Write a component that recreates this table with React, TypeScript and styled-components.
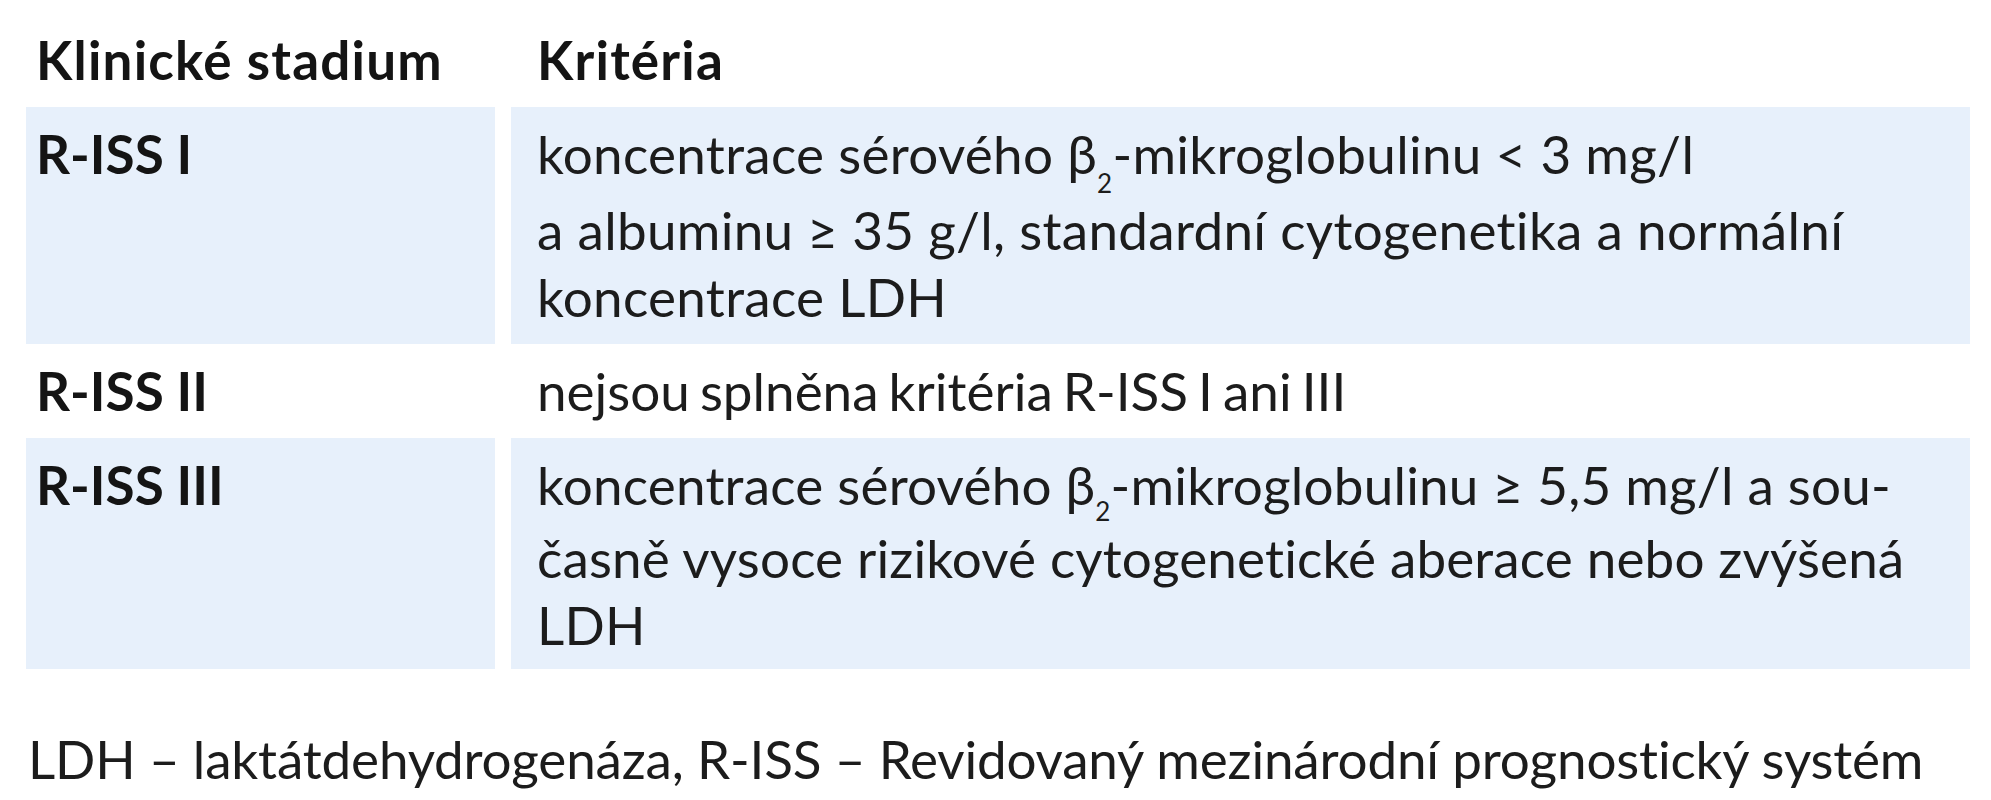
import React from "react";
import styled, { createGlobalStyle } from "styled-components";

const GlobalStyle = createGlobalStyle`
  html, body {
    margin: 0;
    padding: 0;
    background: #ffffff;
  }
  body {
    font-family: Lato, "Liberation Sans", "Noto Sans", sans-serif;
    color: #1a1a1a;
    -webkit-font-smoothing: antialiased;
  }
`;

const Page = styled.div`
  padding: 0 21px 0 26px;
  width: 1944px;
`;

const Table = styled.div`
  display: grid;
  grid-template-columns: 469px 1459px;
  column-gap: 16px;
  font-size: 53px;
  line-height: 67px;
`;

const HeadCell = styled.div<{ $indent: number }>`
  padding: 26px 0 14px ${(p) => p.$indent}px;
  font-weight: 700;
  letter-spacing: 1.2px;
  color: #141414;
  white-space: nowrap;
`;

const Cell = styled.div<{ $shaded: boolean; $indent: number; $bold?: boolean; $padBottom: number }>`
  padding: 13px 0 ${(p) => p.$padBottom}px ${(p) => p.$indent}px;
  background: ${(p) => (p.$shaded ? "#e7f0fb" : "transparent")};
  font-weight: ${(p) => (p.$bold ? 700 : 400)};
  color: ${(p) => (p.$bold ? "#141414" : "#1c1c1c")};
`;

const Line = styled.span<{ $tracking: number; $wordGap: number }>`
  display: block;
  white-space: nowrap;
  letter-spacing: ${(p) => p.$tracking}px;
  word-spacing: ${(p) => p.$wordGap}px;
`;

const Sub = styled.span<{ $drop: number }>`
  font-size: 26px;
  line-height: 1;
  vertical-align: -${(p) => p.$drop}px;
`;

const Footnote = styled.p`
  margin: 56px 0 0 0;
  padding-left: 2px;
  font-size: 53px;
  line-height: 67px;
  letter-spacing: -0.17px;
  color: #1c1c1c;
  white-space: nowrap;
`;

type TextLine = { content: React.ReactNode; tracking?: number; wordGap?: number };

type Row = {
  stage: string;
  shaded: boolean;
  padBottom: number;
  lines: TextLine[];
};

const Beta = ({ drop }: { drop: number }) => (
  <>
    β<Sub $drop={drop}>2</Sub>
  </>
);

const rows: Row[] = [
  {
    stage: "R-ISS I",
    shaded: true,
    padBottom: 14,
    lines: [
      {
        content: (
          <>
            koncentrace sérového <Beta drop={19} />-mikroglobulinu &lt; 3 mg/l
          </>
        ),
      },
      { content: "a albuminu ≥ 35 g/l, standardní cytogenetika a normální" },
      { content: "koncentrace LDH" },
    ],
  },
  {
    stage: "R-ISS II",
    shaded: false,
    padBottom: 14,
    lines: [{ content: "nejsou splněna kritéria R-ISS I ani III", tracking: 0, wordGap: -3.5 }],
  },
  {
    stage: "R-ISS III",
    shaded: true,
    padBottom: 11,
    lines: [
      {
        content: (
          <>
            koncentrace sérového <Beta drop={16} />-mikroglobulinu ≥ 5,5 mg/l a sou-
          </>
        ),
        tracking: 0.22,
      },
      { content: "časně vysoce rizikové cytogenetické aberace nebo zvýšená", tracking: 0.15 },
      { content: "LDH" },
    ],
  },
];

export default function App() {
  return (
    <>
      <GlobalStyle />
      <Page>
        <Table>
          <HeadCell $indent={10}>Klinické stadium</HeadCell>
          <HeadCell $indent={26}>Kritéria</HeadCell>
          {rows.map((r) => (
            <React.Fragment key={r.stage}>
              <Cell $shaded={r.shaded} $indent={10} $bold $padBottom={r.padBottom}>
                {r.stage}
              </Cell>
              <Cell $shaded={r.shaded} $indent={26} $padBottom={r.padBottom}>
                {r.lines.map((l, i) => (
                  <Line key={i} $tracking={l.tracking ?? 0.3} $wordGap={l.wordGap ?? 0}>
                    {l.content}
                  </Line>
                ))}
              </Cell>
            </React.Fragment>
          ))}
        </Table>
        <Footnote>
          LDH – laktátdehydrogenáza, R-ISS – Revidovaný mezinárodní prognostický systém
        </Footnote>
      </Page>
    </>
  );
}
